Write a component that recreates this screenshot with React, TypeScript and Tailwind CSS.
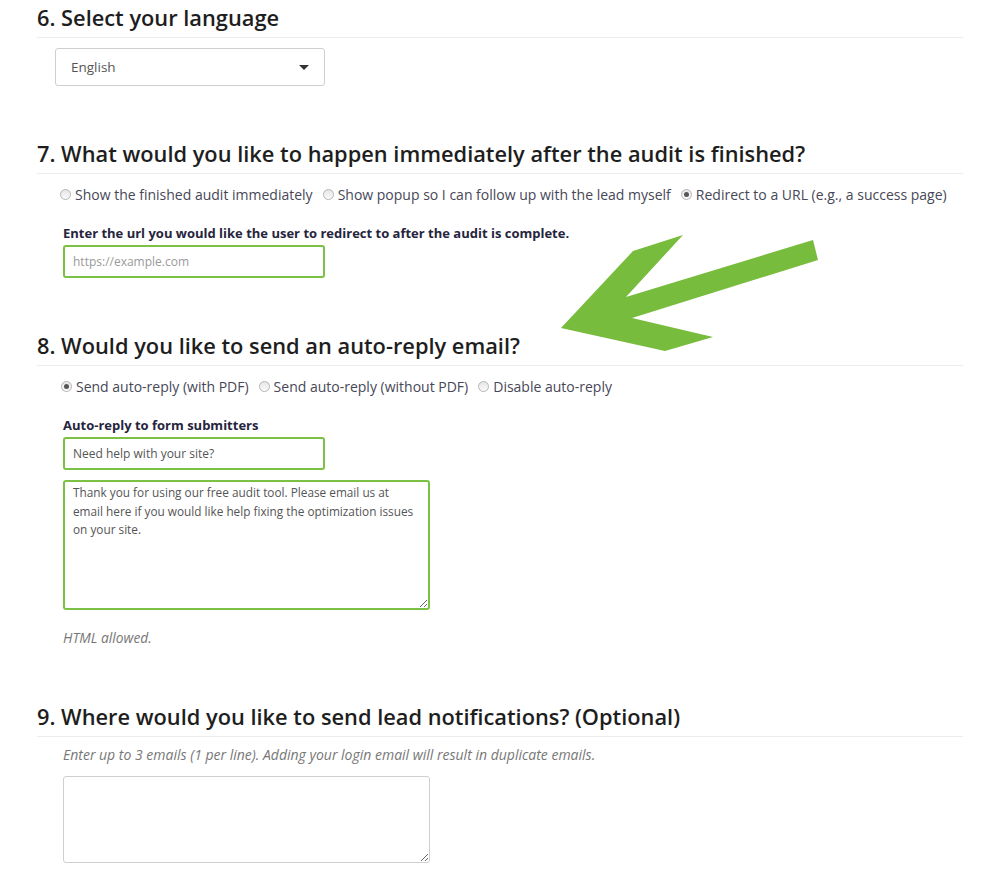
import React from 'react';

const heading = "font-['Open_Sans',sans-serif] font-semibold text-[21.8px] leading-[26px] text-[#1e1e1e] pb-[6px] border-b border-[#ececec]";
const body = "font-['Open_Sans',sans-serif]";

const Radio = ({ checked, label }: { checked?: boolean; label: string }) => (
  <label className="flex items-center gap-[4px] mr-[10px]">
    <span className="w-[11px] h-[11px] rounded-full border border-[#b5b5b5] bg-gradient-to-b from-[#e6e6e6] to-[#fafafa] flex items-center justify-center">
      {checked && <span className="w-[5px] h-[5px] rounded-full bg-[#555]" />}
    </span>
    <span>{label}</span>
  </label>
);

const Arrow = () => (
  <svg className="absolute left-0 top-0 pointer-events-none" width="1000" height="877" viewBox="0 0 1000 877">
    <polygon
      points="561,328 633,251 683,235 626,297 813,240 818,260 632,318 713,337 665,351"
      fill="#77bc3c"
    />
  </svg>
);

export default function App() {
  return (
    <div className="relative w-[1000px] h-[877px] bg-white overflow-hidden">
      <div className="px-[37px]">
        {/* 6 */}
        <h2 className={`${heading} mt-[5px]`}>6. Select your language</h2>
        <div className="mt-[10px] ml-[18px] w-[270px] h-[38px] border border-[#cfcfcf] rounded-[3px] flex items-center justify-between pl-[15px] pr-[15px]">
          <span className="font-['Open_Sans',sans-serif] text-[13.5px] text-[#555]">English</span>
          <span className="w-0 h-0 border-l-[5px] border-r-[5px] border-t-[5px] border-l-transparent border-r-transparent border-t-[#333]" />
        </div>

        {/* 7 */}
        <h2 className={`${heading} mt-[55px]`}>7. What would you like to happen immediately after the audit is finished?</h2>
        <div className={`${body} mt-[10px] ml-[23px] flex items-center h-[20px] text-[14px] text-[#474757]`}>
          <Radio label="Show the finished audit immediately" />
          <Radio label="Show popup so I can follow up with the lead myself" />
          <Radio checked label="Redirect to a URL (e.g., a success page)" />
        </div>
        <div className={`${body} mt-[20px] ml-[26px] text-[13px] leading-[18px] font-bold text-[#25253d]`}>
          Enter the url you would like the user to redirect to after the audit is complete.
        </div>
        <input
          className="block mt-[3px] ml-[26px] w-[262px] h-[33px] border-2 border-[#7bc143] rounded-[3px] px-[8px] font-['Open_Sans',sans-serif] text-[12px] text-[#555] placeholder:text-[#9a9a9a] outline-none"
          placeholder="https://example.com"
        />

        {/* 8 */}
        <h2 className={`${heading} mt-[55px]`}>8. Would you like to send an auto-reply email?</h2>
        <div className={`${body} mt-[10px] ml-[24px] flex items-center h-[20px] text-[14px] text-[#474757]`}>
          <Radio checked label="Send auto-reply (with PDF)" />
          <Radio label="Send auto-reply (without PDF)" />
          <Radio label="Disable auto-reply" />
        </div>
        <div className={`${body} mt-[20px] ml-[26px] text-[13px] leading-[18px] font-bold text-[#25253d]`}>
          Auto-reply to form submitters
        </div>
        <input
          className="block mt-[3px] ml-[26px] w-[262px] h-[33px] border-2 border-[#7bc143] rounded-[3px] px-[8px] font-['Open_Sans',sans-serif] text-[12px] text-[#555] outline-none"
          defaultValue="Need help with your site?"
        />
        <textarea
          className="block mt-[10px] ml-[26px] w-[367px] h-[130px] border-2 border-[#7bc143] rounded-[3px] px-[8px] py-[1px] font-['Open_Sans',sans-serif] text-[11.8px] leading-[18.5px] text-[#555] outline-none resize-y"
          defaultValue="Thank you for using our free audit tool. Please email us at email here if you would like help fixing the optimization issues on your site."
        />
        <div className={`${body} mt-[19px] ml-[26px] text-[13.8px] leading-[18px] italic text-[#777]`}>HTML allowed.</div>

        {/* 9 */}
        <h2 className={`${heading} mt-[57px]`}>9. Where would you like to send lead notifications? (Optional)</h2>
        <div className={`${body} mt-[9px] ml-[26px] text-[14px] leading-[18px] italic text-[#777]`}>
          Enter up to 3 emails (1 per line). Adding your login email will result in duplicate emails.
        </div>
        <textarea className="block mt-[12px] ml-[26px] w-[367px] h-[87px] border border-[#cfcfcf] rounded-[3px] px-[8px] outline-none resize-y" />
      </div>
      <Arrow />
    </div>
  );
}
